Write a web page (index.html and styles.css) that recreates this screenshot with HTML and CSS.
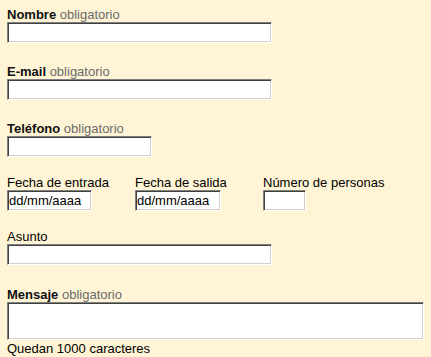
FILE: index.html
```html
<!DOCTYPE html>
<html lang="es">
<head>
    <meta charset="UTF-8">
    <title>Contacto</title>
    <link rel="stylesheet" href="styles.css">
</head>
<body>

<form class="contact-form">
    <div class="field">
        <label for="nombre"><strong>Nombre</strong> <span class="req">obligatorio</span></label>
        <input type="text" id="nombre" class="wide">
    </div>
    <div class="field">
        <label for="email"><strong>E-mail</strong> <span class="req">obligatorio</span></label>
        <input type="text" id="email" class="wide">
    </div>
    <div class="field tight">
        <label for="telefono"><strong>Teléfono</strong> <span class="req">obligatorio</span></label>
        <input type="text" id="telefono" class="medium">
    </div>
    <div class="field tight date-row">
        <div class="col">
            <label for="entrada">Fecha de entrada</label>
            <input type="text" id="entrada" class="date" value="dd/mm/aaaa">
        </div>
        <div class="col">
            <label for="salida">Fecha de salida</label>
            <input type="text" id="salida" class="date date-2" value="dd/mm/aaaa">
        </div>
        <div class="col">
            <label for="personas">Número de personas</label>
            <input type="text" id="personas" class="small">
        </div>
    </div>
    <div class="field loose">
        <label for="asunto">Asunto</label>
        <input type="text" id="asunto" class="wide">
    </div>
    <div class="field last">
        <label for="mensaje"><strong>Mensaje</strong> <span class="req">obligatorio</span></label>
        <textarea id="mensaje"></textarea>
        <p class="counter">Quedan 1000 caracteres</p>
    </div>
</form>

</body>
</html>
```
FILE: styles.css
```css
body {
    margin: 0;
    padding: 7px 7px 0;
    background-color: #fff5d6;
    font-family: "Liberation Sans", Arial, sans-serif;
    font-size: 13px;
    color: #000;
}
.contact-form {
    width: 417px;
}
.field {
    margin-bottom: 21px;
}
.field.tight {
    margin-bottom: 18px;
}
.field.loose {
    margin-bottom: 22px;
}
.field.last {
    margin-bottom: 0;
}
.field label {
    display: block;
    line-height: 15px;
    height: 15px;
    white-space: nowrap;
}
.field label strong {
    color: #111;
}
.req {
    color: #6b6b6b;
}
input,
textarea {
    display: block;
    box-sizing: border-box;
    height: 21px;
    margin: 0;
    padding: 1px 1px;
    background: #fff;
    font-family: "Liberation Sans", Arial, sans-serif;
    font-size: 13px;
    color: #000;
    border: 1px solid;
    border-color: #808080 #fff #fff #808080;
    box-shadow: inset 1px 1px 0 #404040, inset -1px -1px 0 #d4d0c8;
    outline: none;
}
input.wide {
    width: 265px;
}
input.medium {
    width: 145px;
}
input.date {
    width: 85px;
}
input.date-2 {
    width: 86px;
}
input.small {
    width: 43px;
}
.date-row {
    display: grid;
    grid-template-columns: 128px 128px auto;
}
textarea {
    width: 417px;
    height: 38px;
    resize: none;
}
.counter {
    margin: 1px 0 0;
    line-height: 15px;
}
```
